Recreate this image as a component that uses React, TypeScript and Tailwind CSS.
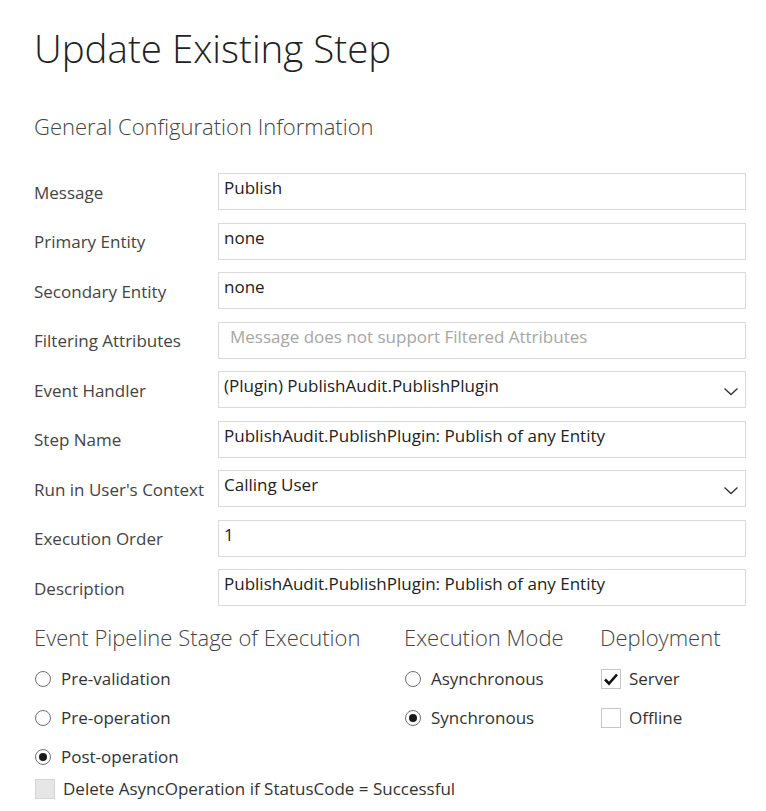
const font = { fontFamily: "'Open Sans', 'Noto Sans', sans-serif" };

type Field = {
  label: string;
  value: string;
  kind?: "text" | "select" | "disabled";
};

const fields: Field[] = [
  { label: "Message", value: "Publish" },
  { label: "Primary Entity", value: "none" },
  { label: "Secondary Entity", value: "none" },
  {
    label: "Filtering Attributes",
    value: "Message does not support Filtered Attributes",
    kind: "disabled",
  },
  { label: "Event Handler", value: "(Plugin) PublishAudit.PublishPlugin", kind: "select" },
  { label: "Step Name", value: "PublishAudit.PublishPlugin: Publish of any Entity" },
  { label: "Run in User's Context", value: "Calling User", kind: "select" },
  { label: "Execution Order", value: "1" },
  { label: "Description", value: "PublishAudit.PublishPlugin: Publish of any Entity" },
];

const Radio = ({ label, checked }: { label: string; checked?: boolean }) => (
  <div className="flex items-center h-[22px]">
    <span className="shrink-0 ml-[1px] w-[16px] h-[16px] rounded-full border border-[#707070] flex items-center justify-center">
      {checked && <span className="w-[8px] h-[8px] rounded-full bg-[#1a1a1a]" />}
    </span>
    <span className="ml-[10px] text-[17px] text-[#333] whitespace-nowrap">{label}</span>
  </div>
);

const Check = ({
  label,
  checked,
  disabled,
}: {
  label: string;
  checked?: boolean;
  disabled?: boolean;
}) => (
  <div className="flex items-center h-[22px]">
    <span
      className={`shrink-0 ml-[1px] w-[20px] h-[20px] border flex items-center justify-center ${
        disabled ? "bg-[#e6e6e6] border-[#d4d4d4]" : "bg-white border-[#c6c6c6]"
      }`}
    >
      {checked && (
        <svg width="16" height="14" viewBox="0 0 16 14">
          <path d="M2 7.5 L6 11.5 L14 2.5" fill="none" stroke="#111" strokeWidth="2.6" />
        </svg>
      )}
    </span>
    <span className="ml-[8px] text-[17px] text-[#333] whitespace-nowrap">{label}</span>
  </div>
);

export default function App() {
  return (
    <div className="bg-white w-[766px] h-[811px] overflow-hidden pl-[34px] pr-[20px]" style={font}>
      <h1 className="pt-[25px] text-[38.5px] leading-[46px] font-light text-[#222]">
        Update Existing Step
      </h1>
      <h2 className="mt-[40px] text-[22px] leading-[30px] font-light text-[#444]">
        General Configuration Information
      </h2>

      <div className="mt-[32px] flex flex-col gap-[12.5px]">
        {fields.map((f) => (
          <div key={f.label} className="flex items-center h-[37px]">
            <div className="w-[184px] shrink-0 pt-[2px] text-[17px] text-[#444] whitespace-nowrap">
              {f.label}
            </div>
            <div className="flex-1 h-[37px] border border-[#d9d9d9] flex items-start justify-between pl-[5px] pr-[6px] pt-[2px]">
              <span
                className={`text-[17px] leading-[24px] whitespace-nowrap ${
                  f.kind === "disabled" ? "text-[#a6a6a6] pl-[6px]" : "text-[#222]"
                }`}
              >
                {f.value}
              </span>
              {f.kind === "select" && (
                <svg width="16" height="9" viewBox="0 0 16 9" className="mt-[13px]">
                  <path d="M1.5 1.5 L8 7.5 L14.5 1.5" fill="none" stroke="#333" strokeWidth="1.3" />
                </svg>
              )}
            </div>
          </div>
        ))}
      </div>

      <div className="mt-[17px] flex">
        <div className="w-[370px] flex flex-col">
          <h3 className="text-[22px] leading-[28px] font-light text-[#444] whitespace-nowrap">
            Event Pipeline Stage of Execution
          </h3>
          <div className="mt-[17px] flex flex-col gap-[17px]">
            <Radio label="Pre-validation" />
            <Radio label="Pre-operation" />
            <Radio label="Post-operation" checked />
          </div>
          <div className="mt-[10px]">
            <Check label="Delete AsyncOperation if StatusCode = Successful" disabled />
          </div>
        </div>
        <div className="w-[196px] flex flex-col">
          <h3 className="text-[22px] leading-[28px] font-light text-[#444]">Execution Mode</h3>
          <div className="mt-[17px] flex flex-col gap-[17px]">
            <Radio label="Asynchronous" />
            <Radio label="Synchronous" checked />
          </div>
        </div>
        <div className="flex flex-col">
          <h3 className="text-[22px] leading-[28px] font-light text-[#444]">Deployment</h3>
          <div className="mt-[17px] flex flex-col gap-[17px]">
            <Check label="Server" checked />
            <Check label="Offline" />
          </div>
        </div>
      </div>
    </div>
  );
}
